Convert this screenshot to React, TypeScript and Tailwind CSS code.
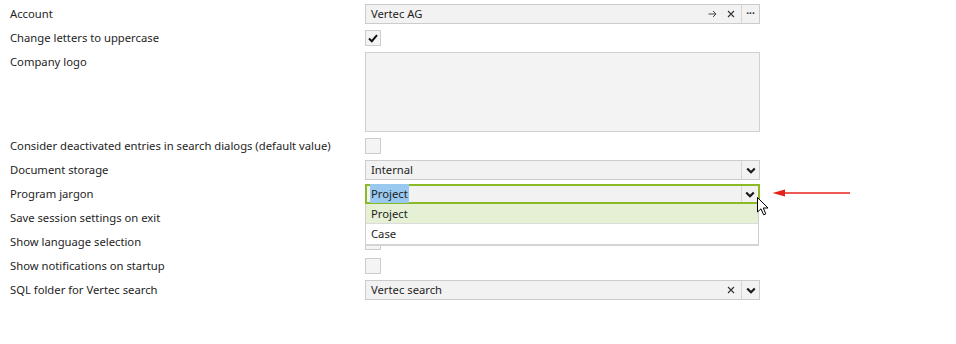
import React from 'react';

const Chevron = () => (
  <svg width="10" height="7" viewBox="0 0 10 7" className="block">
    <polyline points="1.2,1.5 5,5.2 8.8,1.5" fill="none" stroke="#1a1a1a" strokeWidth="2.2" />
  </svg>
);

const Cross = () => (
  <svg width="8" height="8" viewBox="0 0 8 8" className="block">
    <path d="M1 1 L7 7 M7 1 L1 7" stroke="#333" strokeWidth="1.1" />
  </svg>
);

const ArrowRight = () => (
  <svg width="9" height="8" viewBox="0 0 9 8" className="block">
    <path d="M0.5 4 H8 M5 1 L8 4 L5 7" fill="none" stroke="#444" strokeWidth="1" />
  </svg>
);

const Field: React.FC<{ children?: React.ReactNode; className?: string }> = ({ children, className = '' }) => (
  <div className={`h-[20px] border border-[#cccccc] bg-[#f2f2f2] flex items-center ${className}`}>{children}</div>
);

const Checkbox: React.FC<{ checked?: boolean }> = ({ checked }) => (
  <div className="w-[16px] h-[16px] border border-[#cccccc] bg-[#f4f4f4] flex items-center justify-center">
    {checked && (
      <svg width="10" height="9" viewBox="0 0 10 9">
        <polyline points="1,4.5 3.8,7.2 9,1.2" fill="none" stroke="#111" strokeWidth="2" />
      </svg>
    )}
  </div>
);

const Row: React.FC<{ label: string; children: React.ReactNode }> = ({ label, children }) => (
  <div className="flex h-[24px] items-center">
    <div className="w-[365px] pl-[10px] pt-[1px] whitespace-nowrap">{label}</div>
    <div className="w-[395px] relative">{children}</div>
  </div>
);

export default function App() {
  return (
    <div className="relative w-[956px] h-[344px] bg-white text-[11.25px] text-[#1e1e1e] font-['Noto_Sans',sans-serif] overflow-hidden">
      <div className="flex flex-col pt-[2px]">
        <Row label="Account">
          <Field className="pl-[5px]">
            <span className="flex-1 pt-[1px]">Vertec AG</span>
            <div className="flex items-center gap-[10px] pr-[6px]">
              <ArrowRight />
              <Cross />
            </div>
            <div className="w-[18px] h-full border-l border-[#d6d6d6] flex items-center justify-center text-[10px] font-bold leading-none pb-[3px]">···</div>
          </Field>
        </Row>
        <Row label="Change letters to uppercase">
          <Checkbox checked />
        </Row>
        <div className="flex h-[84px]">
          <div className="w-[365px] pl-[10px] pt-[1px] h-[24px] flex items-center">Company logo</div>
          <div className="w-[395px] pt-[2px]">
            <div className="h-[80px] border border-[#d0d0d0] bg-[#f3f3f3]" />
          </div>
        </div>
        <Row label="Consider deactivated entries in search dialogs (default value)">
          <Checkbox />
        </Row>
        <Row label="Document storage">
          <Field className="pl-[5px]">
            <span className="flex-1 pt-[1px]">Internal</span>
            <div className="w-[18px] h-full border-l border-[#d6d6d6] flex items-center justify-center">
              <Chevron />
            </div>
          </Field>
        </Row>
        <Row label="Program jargon">
          <div className="h-[20px] border-2 border-[#8cba25] bg-[#f2f2f2] flex items-center pl-[3px]">
            <span className="flex-1 pt-[1px]">
              <span className="bg-[#99c9ef] px-[1px] py-[2px]">Project</span>
            </span>
            <div className="w-[17px] h-full border-l border-[#d6d6d6] flex items-center justify-center">
              <Chevron />
            </div>
          </div>
          <div className="absolute left-0 top-[20px] w-[394px] z-10 bg-white border border-[#cfcfcf] border-b-2 border-b-[#d4d4d4] border-t-0">
            <div className="h-[20px] bg-[#e6f0d4] flex items-center pl-[5px] pt-[1px] border-b border-[#dcdcdc]">Project</div>
            <div className="h-[20px] flex items-center pl-[5px] pt-[1px]">Case</div>
          </div>
        </Row>
        <Row label="Save session settings on exit">
          <Checkbox />
        </Row>
        <Row label="Show language selection">
          <Checkbox />
        </Row>
        <Row label="Show notifications on startup">
          <Checkbox />
        </Row>
        <Row label="SQL folder for Vertec search">
          <Field className="pl-[5px]">
            <span className="flex-1 pt-[1px]">Vertec search</span>
            <div className="pr-[6px]">
              <Cross />
            </div>
            <div className="w-[18px] h-full border-l border-[#d6d6d6] flex items-center justify-center">
              <Chevron />
            </div>
          </Field>
        </Row>
      </div>

      {/* mouse cursor */}
      <svg className="absolute left-[757px] top-[197px] z-20" width="14" height="20" viewBox="0 0 14 20">
        <path d="M0.5 0.5 L0.5 15 L4 11.8 L6.6 17.8 L8.8 16.9 L6.3 11 L11 11 Z" fill="#fff" stroke="#000" strokeWidth="1" />
      </svg>

      {/* red annotation arrow */}
      <svg className="absolute left-[772px] top-[188px]" width="80" height="10" viewBox="0 0 80 10">
        <path d="M10 5 H78" stroke="#e8201c" strokeWidth="1.3" />
        <path d="M0.5 5 L13 1.5 L13 8.5 Z" fill="#e8201c" />
      </svg>
    </div>
  );
}
